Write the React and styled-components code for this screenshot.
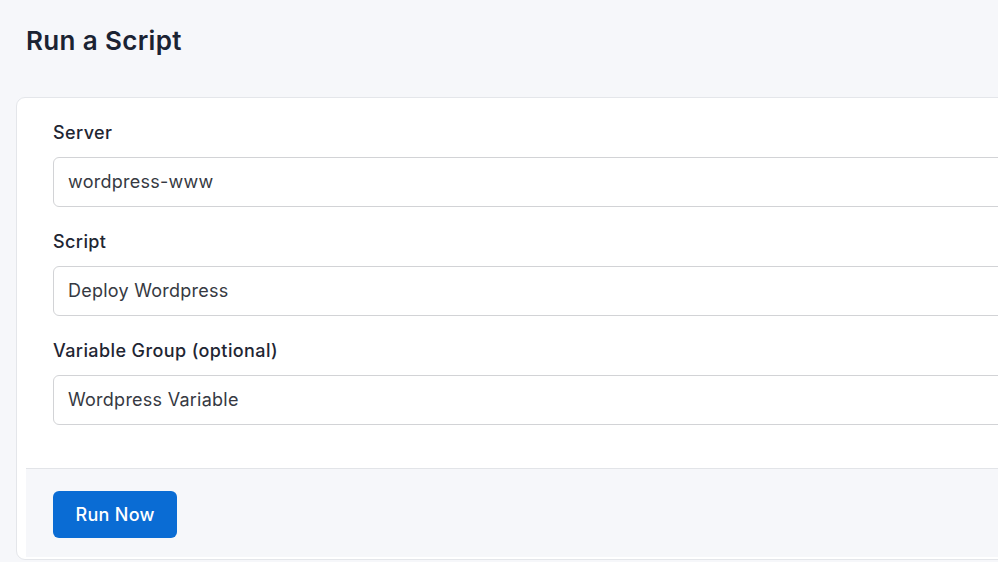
import React from "react";
import styled, { createGlobalStyle } from "styled-components";

const Global = createGlobalStyle`
  html, body { margin: 0; padding: 0; overflow: hidden; }
  body {
    background: #f6f7fa;
    font-family: Inter, "Noto Sans", sans-serif;
    -webkit-font-smoothing: antialiased;
  }
`;

const Page = styled.div`
  width: 1300px;
  padding: 25px 0 0 16px;
  box-sizing: border-box;
`;

const Title = styled.h1`
  margin: 0 0 40px 10px;
  font-size: 26px;
  line-height: 32px;
  font-weight: 600;
  color: #1b2333;
  letter-spacing: 0.35px;
`;

const Card = styled.div`
  background: #ffffff;
  border: 1px solid #e4e6ea;
  border-radius: 9px;
  padding: 22.5px 0 2px 9px;
  display: flex;
  flex-direction: column;
`;

const Fields = styled.div`
  display: flex;
  flex-direction: column;
  gap: 23px;
  padding: 0 0 43px 27px;
`;

const Field = styled.div`
  display: flex;
  flex-direction: column;
  gap: 12px;
`;

const Label = styled.label`
  font-size: 18px;
  line-height: 24px;
  font-weight: 450;
  color: #1f2633;
  letter-spacing: 0.4px;
`;

const Input = styled.div`
  height: 50px;
  box-sizing: border-box;
  border: 1px solid #d2d3d6;
  border-radius: 6px;
  padding: 0 14px;
  display: flex;
  align-items: center;
  font-size: 18px;
  color: #363942;
  letter-spacing: 0.25px;
`;

const Footer = styled.div`
  background: #f6f7fa;
  border-top: 1px solid #e2e4e8;
  padding: 22px 27px 19px;
  display: flex;
`;

const Button = styled.button`
  height: 47px;
  padding: 0 22.5px;
  border: none;
  border-radius: 6px;
  background: #0a6cd4;
  color: #ffffff;
  font-family: inherit;
  font-size: 18px;
  font-weight: 500;
  letter-spacing: 0.3px;
  cursor: pointer;
`;

const fields = [
  { label: "Server", value: "wordpress-www" },
  { label: "Script", value: "Deploy Wordpress" },
  { label: "Variable Group (optional)", value: "Wordpress Variable" },
];

export default function App() {
  return (
    <>
      <Global />
      <Page>
        <Title>Run a Script</Title>
        <Card>
          <Fields>
            {fields.map((f) => (
              <Field key={f.label}>
                <Label>{f.label}</Label>
                <Input>{f.value}</Input>
              </Field>
            ))}
          </Fields>
          <Footer>
            <Button>Run Now</Button>
          </Footer>
        </Card>
      </Page>
    </>
  );
}
